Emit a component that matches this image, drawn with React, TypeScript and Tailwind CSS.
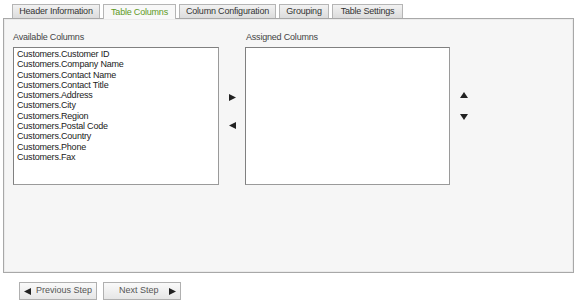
import React from "react";

const font = { fontFamily: '"Liberation Sans", Arial, sans-serif' };

function Tri({ dir }: { dir: "r" | "l" | "u" | "d" }) {
  const pts =
    dir === "r" ? "0,0 7,3.5 0,7" : dir === "l" ? "7,0 0,3.5 7,7" : dir === "u" ? "0,7 3.5,0 7,7" : "0,0 7,0 3.5,7";
  const w = dir === "r" || dir === "l" ? 7 : 8;
  const h = dir === "r" || dir === "l" ? 7 : 6;
  return (
    <svg width={w} height={h} viewBox="0 0 7 7" preserveAspectRatio="none">
      <polygon points={pts} fill="#222" />
    </svg>
  );
}

const tabs: [string, string][] = [
  ["Header Information", "w-[88px]"],
  ["Table Columns", "w-[73px]"],
  ["Column Configuration", "w-[97px]"],
  ["Grouping", "w-[50px]"],
  ["Table Settings", "w-[71px]"],
];
const items = [
  "Customers.Customer ID",
  "Customers.Company Name",
  "Customers.Contact Name",
  "Customers.Contact Title",
  "Customers.Address",
  "Customers.City",
  "Customers.Region",
  "Customers.Postal Code",
  "Customers.Country",
  "Customers.Phone",
  "Customers.Fax",
];

export default function App() {
  return (
    <div className="w-[576px] h-[302px] bg-white overflow-hidden text-[9px] text-[#333]" style={font}>
      <div className="flex items-end pl-[12px] pt-[4px] h-[18px] gap-[3px]">
        {tabs.map(([t, w], i) => {
          const active = i === 1;
          return (
            <div
              key={t}
              className={
                w +
                " h-[14px] flex items-center justify-center whitespace-nowrap tracking-[-0.2px] border border-b-0 border-[#b5b5b5] leading-none " +
                (active
                  ? "bg-[#f8f8f8] text-[#5e9a1e] h-[15px] -mb-px relative z-10"
                  : "bg-gradient-to-b from-[#f2f2f2] to-[#dcdcdc] text-[#333]")
              }
            >
              {t}
            </div>
          );
        })}
      </div>
      <div className="ml-[3px] w-[571px] h-[255px] border border-[#a8a8a8] bg-[#f6f6f6] shadow-[inset_0_0_0_1px_#ebebeb]">
        <div className="flex pl-[9px] pt-[12px]">
          <div className="flex flex-col">
            <div className="h-[12px] leading-[12px] text-[#444] tracking-[-0.2px]">Available Columns</div>
            <div className="mt-[4px] w-[206px] h-[138px] bg-white border border-[#9a9a9a] border-t-[#808080] border-l-[#808080] pl-[3px] pt-[1px] text-[9px] tracking-[-0.2px] leading-[10.3px] text-[#222]">
              {items.map((it) => (
                <div key={it}>{it}</div>
              ))}
            </div>
          </div>
          <div className="w-[26px] flex flex-col items-center pt-[63px]">
            <Tri dir="r" />
            <div className="h-[21px]" />
            <Tri dir="l" />
          </div>
          <div className="flex flex-col">
            <div className="h-[12px] leading-[12px] text-[#444] pl-[1px] tracking-[-0.2px]">Assigned Columns</div>
            <div className="mt-[4px] w-[205px] h-[138px] bg-white border border-[#9a9a9a] border-t-[#808080] border-l-[#808080]" />
          </div>
          <div className="w-[26px] flex flex-col items-center pt-[61px] pl-[1px]">
            <Tri dir="u" />
            <div className="h-[16px]" />
            <Tri dir="d" />
          </div>
        </div>
      </div>
      <div className="flex gap-[6px] pl-[19px] pt-[9px]">
        <div className="w-[78px] h-[18px] border border-[#b0b0b0] bg-gradient-to-b from-[#fafafa] to-[#e6e6e6] flex items-center pl-[4px] gap-[5px] text-[#555] whitespace-nowrap">
          <Tri dir="l" />
          <span>Previous Step</span>
        </div>
        <div className="w-[78px] h-[18px] border border-[#b0b0b0] bg-gradient-to-b from-[#fafafa] to-[#e6e6e6] flex items-center justify-between pl-[15px] pr-[4px] text-[#555] whitespace-nowrap">
          <span>Next Step</span>
          <Tri dir="r" />
        </div>
      </div>
    </div>
  );
}
